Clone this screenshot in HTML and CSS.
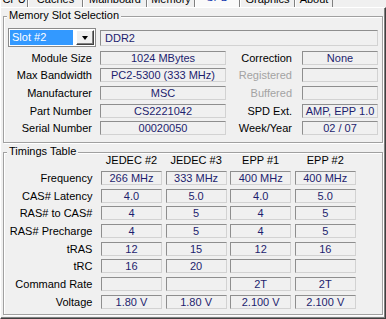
FILE: index.html
```html
<!DOCTYPE html>
<html lang="en">
<head>
    <meta charset="UTF-8">
    <title>CPU-Z SPD</title>
    <link rel="stylesheet" href="styles.css">
</head>
<body>
    <div class="tabs">
        <div class="tab tab-cpu"><span>CPU</span></div>
        <div class="tab tab-caches"><span>Caches</span></div>
        <div class="tab tab-board"><span>Mainboard</span></div>
        <div class="tab tab-memory"><span>Memory</span></div>
        <div class="tab tab-spd active"><span>SPD</span></div>
        <div class="tab tab-graphics"><span>Graphics</span></div>
        <div class="tab tab-about"><span>About</span></div>
    </div>

    <div class="panel">
        <div class="group group-slot">
            <span class="group-title">Memory Slot Selection</span>
            <div class="slot-grid">
                <div class="combo">
                    <span class="combo-value">Slot #2</span>
                    <span class="combo-btn"></span>
                </div>
                <div class="field field-wide">DDR2</div>

                <div class="label">Module Size</div>
                <div class="field">1024 MBytes</div>
                <div class="label label-right">Correction</div>
                <div class="field">None</div>

                <div class="label">Max Bandwidth</div>
                <div class="field">PC2-5300 (333 MHz)</div>
                <div class="label label-right label-off">Registered</div>
                <div class="field"></div>

                <div class="label">Manufacturer</div>
                <div class="field">MSC</div>
                <div class="label label-right label-off">Buffered</div>
                <div class="field"></div>

                <div class="label">Part Number</div>
                <div class="field">CS2221042</div>
                <div class="label label-right">SPD Ext.</div>
                <div class="field">AMP, EPP 1.0</div>

                <div class="label">Serial Number</div>
                <div class="field">00020050</div>
                <div class="label label-right">Week/Year</div>
                <div class="field">02 / 07</div>
            </div>
        </div>

        <div class="group group-timings">
            <span class="group-title">Timings Table</span>
            <div class="timing-grid">
                <div></div>
                <div class="col-head">JEDEC #2</div>
                <div class="col-head">JEDEC #3</div>
                <div class="col-head">EPP #1</div>
                <div class="col-head">EPP #2</div>

                <div class="label t-label">Frequency</div>
                <div class="field">266 MHz</div>
                <div class="field">333 MHz</div>
                <div class="field">400 MHz</div>
                <div class="field">400 MHz</div>

                <div class="label t-label">CAS# Latency</div>
                <div class="field">4.0</div>
                <div class="field">5.0</div>
                <div class="field">4.0</div>
                <div class="field">5.0</div>

                <div class="label t-label">RAS# to CAS#</div>
                <div class="field">4</div>
                <div class="field">5</div>
                <div class="field">4</div>
                <div class="field">5</div>

                <div class="label t-label">RAS# Precharge</div>
                <div class="field">4</div>
                <div class="field">5</div>
                <div class="field">4</div>
                <div class="field">5</div>

                <div class="label t-label">tRAS</div>
                <div class="field">12</div>
                <div class="field">15</div>
                <div class="field">12</div>
                <div class="field">16</div>

                <div class="label t-label">tRC</div>
                <div class="field">16</div>
                <div class="field">20</div>
                <div class="field"></div>
                <div class="field"></div>

                <div class="label t-label">Command Rate</div>
                <div class="field"></div>
                <div class="field"></div>
                <div class="field">2T</div>
                <div class="field">2T</div>

                <div class="label t-label">Voltage</div>
                <div class="field">1.80 V</div>
                <div class="field">1.80 V</div>
                <div class="field">2.100 V</div>
                <div class="field">2.100 V</div>
            </div>
        </div>
    </div>
</body>
</html>
```

FILE: styles.css
```css
body {
    margin: 0;
    width: 386px;
    height: 319px;
    overflow: hidden;
    background: #f0f0f0;
    color: #000;
    font-family: "Liberation Sans", Arial, sans-serif;
    font-size: 11px;
}

/* tab strip, only the bottom of it is visible */
.tabs {
    display: flex;
    height: 7px;
    overflow: hidden;
}
.tab {
    box-sizing: border-box;
    height: 7px;
    line-height: 13px;
    text-align: center;
    border-left: 1px solid #fff;
    border-right: 1px solid #808080;
    white-space: nowrap;
}
.tab span {
    display: block;
    margin-top: -7px;
}
.tab-cpu { width: 28px; }
.tab-caches { width: 55px; }
.tab-board { width: 64px; }
.tab-memory { width: 48px; }
.tab-spd { width: 45px; }
.tab-graphics { width: 55px; }
.tab-about { width: 38px; }
.tab.active {
    background: #fafafa;
    color: #1c3fb0;
}
.tab.active span {
    margin-top: -9px;
}

.panel {
    border-top: 1px solid #fff;
    border-left: 1px solid #fff;
    border-right: 1px solid #404040;
    border-bottom: 1px solid #404040;
    box-shadow: inset -1px -1px 0 #808080;
    padding: 8px 2px 3px 2px;
}

.group {
    position: relative;
    box-sizing: border-box;
    border: 1px solid #a0a0a0;
    box-shadow: inset 1px 1px 0 #fff, 1px 1px 0 #fff;
}
.group-title {
    position: absolute;
    top: -8px;
    left: 3px;
    padding: 0 2px;
    line-height: 13px;
    background: #f0f0f0;
}
.group-slot {
    height: 127px;
    padding: 11px 0 0 4px;
}
.group-timings {
    height: 163px;
    margin-top: 9px;
    padding: 0.3px 0 0 4px;
}

.slot-grid {
    display: grid;
    grid-template-columns: 92px 126px 76px 76px;
    grid-template-rows: 19px repeat(5, 14px);
    row-gap: 3.7px;
}
.timing-grid {
    display: grid;
    grid-template-columns: 89.4px repeat(4, 61px);
    grid-auto-rows: 14px;
    column-gap: 3.6px;
    row-gap: 3.7px;
}

.combo {
    display: flex;
    box-sizing: border-box;
    width: 88px;
    height: 19px;
    padding: 1px;
    border: 1px solid #8a8a8a;
    background: #fff;
}
.combo-value {
    width: 63px;
    padding-left: 2px;
    box-sizing: border-box;
    line-height: 15px;
    background: #3399ff;
    color: #fff;
}
.combo-btn {
    display: flex;
    align-items: center;
    justify-content: center;
    box-sizing: border-box;
    width: 18px;
    margin-left: 3px;
    border: 1px solid;
    border-color: #fff #404040 #404040 #fff;
    box-shadow: inset -1px -1px 0 #808080;
    background: #f0f0f0;
}
.combo-btn::after {
    content: "";
    width: 0;
    height: 0;
    border-left: 3.5px solid transparent;
    border-right: 3.5px solid transparent;
    border-top: 4px solid #000;
}

.label {
    padding-right: 8px;
    line-height: 14px;
    text-align: right;
    white-space: nowrap;
}
.label-right {
    padding-right: 10px;
}
.label-off {
    color: #a3a3a3;
}
.t-label {
    padding-right: 5px;
}
.col-head {
    line-height: 14px;
    text-align: center;
    white-space: nowrap;
}

.field {
    box-sizing: border-box;
    height: 14px;
    border: 1px solid;
    border-color: #8e8e8e #d2d2d2 #d2d2d2 #8e8e8e;
    line-height: 12px;
    text-align: center;
    color: #1d1d6e;
    white-space: nowrap;
    overflow: hidden;
}
.field-wide {
    grid-column: 2 / 5;
    align-self: center;
    height: 16px;
    padding-left: 4px;
    line-height: 14px;
    text-align: left;
}
```
